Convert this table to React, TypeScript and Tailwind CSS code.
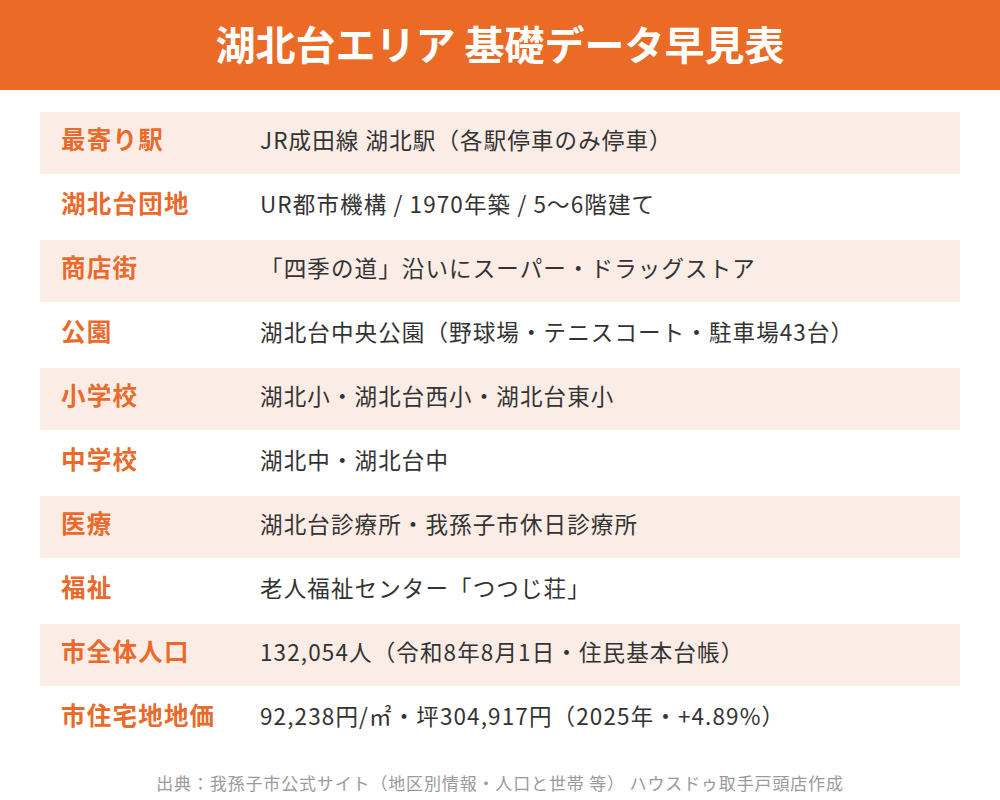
const rows: [string, string][] = [
  ["最寄り駅", "JR成田線 湖北駅（各駅停車のみ停車）"],
  ["湖北台団地", "UR都市機構 / 1970年築 / 5〜6階建て"],
  ["商店街", "「四季の道」沿いにスーパー・ドラッグストア"],
  ["公園", "湖北台中央公園（野球場・テニスコート・駐車場43台）"],
  ["小学校", "湖北小・湖北台西小・湖北台東小"],
  ["中学校", "湖北中・湖北台中"],
  ["医療", "湖北台診療所・我孫子市休日診療所"],
  ["福祉", "老人福祉センター「つつじ荘」"],
  ["市全体人口", "132,054人（令和8年8月1日・住民基本台帳）"],
  ["市住宅地地価", "92,238円/㎡・坪304,917円（2025年・+4.89%）"],
];

export default function App() {
  return (
    <div
      className="w-[1000px] h-[800px] bg-white overflow-hidden"
      style={{ fontFamily: '"Noto Sans CJK JP", "Noto Sans", sans-serif' }}
    >
      {/* header */}
      <div className="h-[90px] pb-[4px] bg-[#eb6a26] flex items-center justify-center">
        <h1 className="text-white font-bold text-[40px] leading-none">
          湖北台エリア 基礎データ早見表
        </h1>
      </div>

      {/* table */}
      <div className="mx-[40px] mt-[22px] flex flex-col gap-[2px]">
        {rows.map(([label, value], i) => (
          <div
            key={label}
            className={
              "h-[62px] pb-[7px] flex items-center " +
              (i % 2 === 0 ? "bg-[#fbede6]" : "bg-white")
            }
          >
            <div className="w-[220px] pl-[21px] text-[24.5px] font-bold text-[#e96a2a] tracking-[0.05em]">
              {label}
            </div>
            <div className="text-[22.5px] text-[#333333] tracking-[0.05em]">
              {value}
            </div>
          </div>
        ))}
      </div>

      {/* footer */}
      <p className="mt-[20px] text-center text-[17px] text-[#9a9a9a] tracking-[0.05em]">
        出典：我孫子市公式サイト（地区別情報・人口と世帯 等） ハウスドゥ取手戸頭店作成
      </p>
    </div>
  );
}
